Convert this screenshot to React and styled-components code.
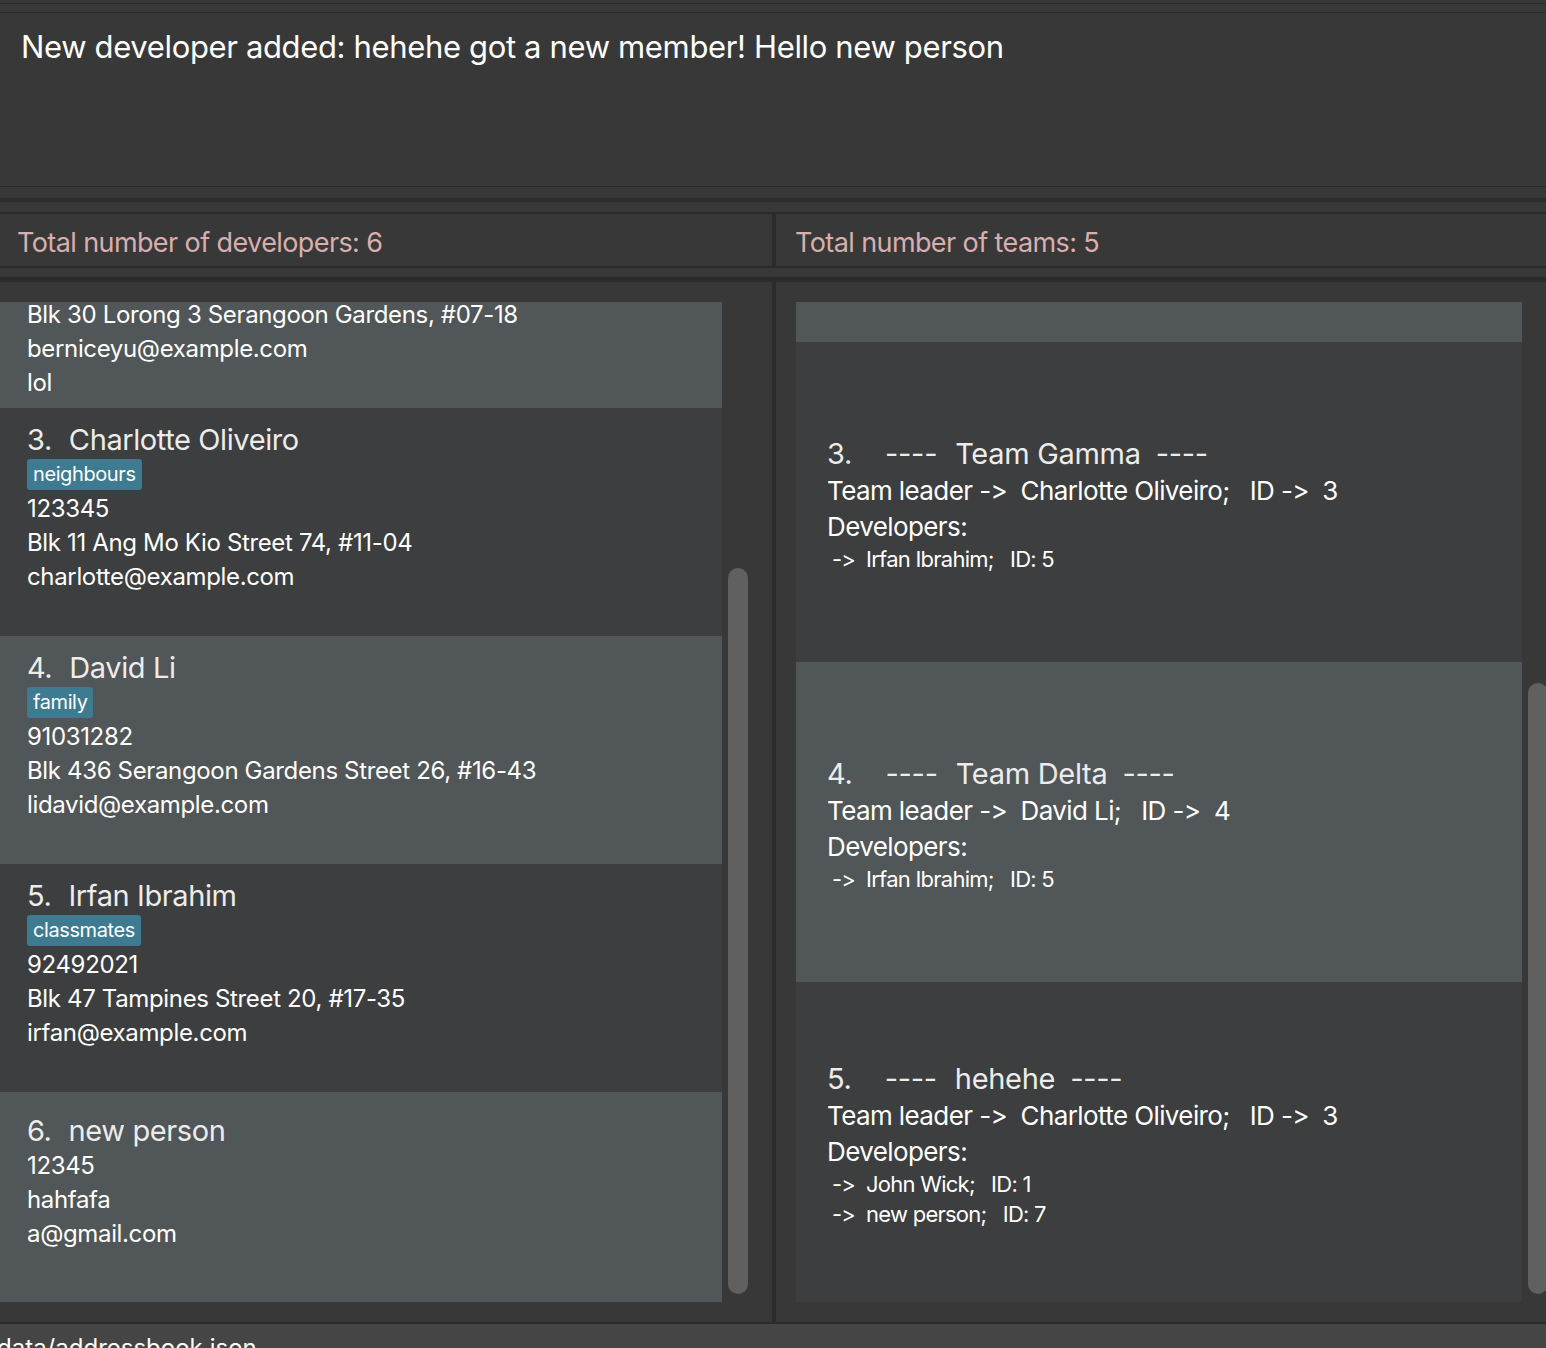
import React, { useLayoutEffect, useRef } from 'react'
import styled, { createGlobalStyle } from 'styled-components'

const GlobalStyle = createGlobalStyle`
  html, body {
    margin: 0;
    padding: 0;
    background: #383838;
    overflow: hidden;
  }
  body {
    font-family: Inter, "Noto Sans", sans-serif;
    color: #ffffff;
  }
`

const persons = [
  { name: 'Alex Yeoh', tags: ['friends'], phone: '87438807', address: 'Blk 30 Geylang Street 29, #06-40', email: 'alexyeoh@example.com' },
  { name: 'Bernice Yu', tags: ['colleagues', 'friends'], phone: '99272758', address: 'Blk 30 Lorong 3 Serangoon Gardens, #07-18', email: 'berniceyu@example.com', remark: 'lol' },
  { name: 'Charlotte Oliveiro', tags: ['neighbours'], phone: '123345', address: 'Blk 11 Ang Mo Kio Street 74, #11-04', email: 'charlotte@example.com' },
  { name: 'David Li', tags: ['family'], phone: '91031282', address: 'Blk 436 Serangoon Gardens Street 26, #16-43', email: 'lidavid@example.com' },
  { name: 'Irfan Ibrahim', tags: ['classmates'], phone: '92492021', address: 'Blk 47 Tampines Street 20, #17-35', email: 'irfan@example.com' },
  { name: 'new person', tags: [], phone: '12345', address: 'hahfafa', email: 'a@gmail.com' },
]

const teams = [
  { name: 'Team Alpha', leader: 'Alex Yeoh', leaderId: 1, devs: [{ name: 'Bernice Yu', id: 2 }] },
  { name: 'Team Beta', leader: 'Bernice Yu', leaderId: 2, devs: [{ name: 'Alex Yeoh', id: 1 }] },
  { name: 'Team Gamma', leader: 'Charlotte Oliveiro', leaderId: 3, devs: [{ name: 'Irfan Ibrahim', id: 5 }] },
  { name: 'Team Delta', leader: 'David Li', leaderId: 4, devs: [{ name: 'Irfan Ibrahim', id: 5 }] },
  { name: 'hehehe', leader: 'Charlotte Oliveiro', leaderId: 3, devs: [{ name: 'John Wick', id: 1 }, { name: 'new person', id: 7 }] },
]

const Window = styled.div`
  width: 1546px;
  height: 1348px;
  display: flex;
  flex-direction: column;
  background: #383838;
  overflow: hidden;
`

const Band = styled.div`
  flex: none;
  height: ${(p) => p.$h}px;
  border-bottom: ${(p) => p.$rule}px solid #2b2b2b;
  background: #383838;
`

const ResultBox = styled.div`
  flex: none;
  height: 174px;
  padding: 13px 0 0 21px;
  box-sizing: border-box;
  border-bottom: 1px solid #2b2b2b;
  font-size: 31px;
  line-height: 42px;
  letter-spacing: -0.35px;
  color: #ffffff;
`

const Split = styled.div`
  flex: none;
  display: grid;
  grid-template-columns: 772px 4px 1fr;
  height: ${(p) => p.$h}px;
  border-bottom: ${(p) => p.$rule}px solid #2b2b2b;
`

const Divider = styled.div`
  background: #2b2b2b;
`

const HeaderCell = styled.div`
  display: flex;
  align-items: center;
  padding: 4px 0 0 ${(p) => p.$pad}px;
  font-size: 27px;
  letter-spacing: -0.6px;
  color: #d9aeae;
`

const Panel = styled.div`
  display: flex;
  align-items: flex-start;
  gap: 6px;
  padding: 20px 0 0 ${(p) => p.$pad}px;
  overflow: hidden;
`

const Viewport = styled.div`
  flex: none;
  width: ${(p) => p.$w}px;
  height: 1000px;
  overflow: hidden;
`

const Track = styled.div`
  flex: none;
  width: 20px;
  height: 1000px;
  display: flex;
  flex-direction: column;
`

const Thumb = styled.div`
  flex: none;
  width: 20px;
  margin-top: ${(p) => p.$top}px;
  height: ${(p) => p.$len}px;
  border-radius: 10px;
  background: #606060;
`

const PersonCard = styled.div`
  height: 228px;
  box-sizing: border-box;
  padding: ${(p) => p.$top}px 0 0 27px;
  display: flex;
  flex-direction: column;
  background: ${(p) => (p.$odd ? '#515658' : '#3c3e3f')};
  color: #ffffff;
`

const NameRow = styled.div`
  height: 36px;
  display: flex;
  align-items: center;
  gap: 17px;
  font-size: 29px;
  letter-spacing: -0.4px;
  color: #ececec;
`

const TagRow = styled.div`
  height: 34px;
  display: flex;
  align-items: center;
  gap: 6px;
`

const Tag = styled.span`
  height: 31px;
  display: flex;
  align-items: center;
  padding: 0 6px;
  border-radius: 3px;
  background: #3e7b91;
  font-size: 20px;
  letter-spacing: -0.4px;
  color: #ffffff;
`

const Line = styled.div`
  height: 34px;
  display: flex;
  align-items: center;
  font-size: 24px;
  letter-spacing: -0.35px;
  color: #ffffff;
`

const TeamCard = styled.div`
  height: 320px;
  box-sizing: border-box;
  padding: 4px 0 0 31px;
  display: flex;
  flex-direction: column;
  justify-content: center;
  background: ${(p) => (p.$odd ? '#515658' : '#3c3e3f')};
  color: #ffffff;
  white-space: pre;
`

const TeamTitle = styled.div`
  height: 37px;
  display: flex;
  align-items: center;
  font-size: 29px;
  letter-spacing: -0.3px;
  color: #ececec;
`

const Dashes = styled.span`
  margin: 0 ${(p) => p.$right}px 0 ${(p) => p.$left}px;
`

const TeamLine = styled.div`
  height: ${(p) => p.$h}px;
  display: flex;
  align-items: center;
  font-size: 26px;
  letter-spacing: -0.6px;
`

const DevLine = styled.div`
  height: 30px;
  display: flex;
  align-items: center;
  padding-left: 5px;
  font-size: 22px;
  letter-spacing: -0.75px;
`

const StatusBar = styled.div`
  flex: none;
  height: 24px;
  border-top: 2px solid #2b2b2b;
  background: #454545;
  font-size: 24px;
  line-height: 48px;
  text-indent: -3px;
  overflow: hidden;
  color: #ffffff;
  white-space: nowrap;
`

function ScrollList({ width, scroll, thumbTop, thumbLen, pad, children }) {
  const ref = useRef(null)
  useLayoutEffect(() => {
    if (ref.current) ref.current.scrollTop = scroll
  }, [scroll])
  return (
    <Panel $pad={pad}>
      <Viewport ref={ref} $w={width}>{children}</Viewport>
      <Track>
        <Thumb $top={thumbTop} $len={thumbLen} />
      </Track>
    </Panel>
  )
}

function Person({ p, index }) {
  return (
    <PersonCard $odd={index % 2 === 1} $top={p.tags.length ? 13 : 20}>
      <NameRow>
        <span>{index + 1}.</span>
        <span>{p.name}</span>
      </NameRow>
      {p.tags.length > 0 && (
        <TagRow>
          {p.tags.map((t) => <Tag key={t}>{t}</Tag>)}
        </TagRow>
      )}
      <Line>{p.phone}</Line>
      <Line>{p.address}</Line>
      <Line>{p.email}</Line>
      {p.remark && <Line>{p.remark}</Line>}
    </PersonCard>
  )
}

function Team({ t, index }) {
  return (
    <TeamCard $odd={index % 2 === 1}>
      <TeamTitle>
        <span>{index + 1}.</span>
        <Dashes $left={33} $right={18}>----</Dashes>
        <span>{t.name}</span>
        <Dashes $left={15} $right={0}>----</Dashes>
      </TeamTitle>
      <TeamLine $h={37}>{`Team leader ->  ${t.leader};   ID ->  ${t.leaderId}`}</TeamLine>
      <TeamLine $h={35}>Developers:</TeamLine>
      {t.devs.map((d) => (
        <DevLine key={d.name}>{`->  ${d.name};   ID: ${d.id}`}</DevLine>
      ))}
    </TeamCard>
  )
}

export default function App() {
  return (
    <Window>
      <GlobalStyle />
      <Band $h={3} $rule={1} />
      <Band $h={8} $rule={1} />
      <ResultBox>New developer added: hehehe got a new member! Hello new person</ResultBox>
      <Band $h={11} $rule={4} />
      <Band $h={10} $rule={2} />
      <Split $h={52} $rule={2}>
        <HeaderCell $pad={17}>Total number of developers: {persons.length}</HeaderCell>
        <Divider />
        <HeaderCell $pad={19}>Total number of teams: {teams.length}</HeaderCell>
      </Split>
      <Band $h={9} $rule={5} />
      <Split $h={1040} $rule={0}>
        <ScrollList width={722} scroll={350} thumbTop={266} thumbLen={726} pad={0}>
          {persons.map((p, i) => <Person key={p.name} p={p} index={i} />)}
        </ScrollList>
        <Divider />
        <ScrollList width={726} scroll={600} thumbTop={381} thumbLen={611} pad={20}>
          {teams.map((t, i) => <Team key={t.name} t={t} index={i} />)}
        </ScrollList>
      </Split>
      <StatusBar>data/addressbook.json</StatusBar>
    </Window>
  )
}
